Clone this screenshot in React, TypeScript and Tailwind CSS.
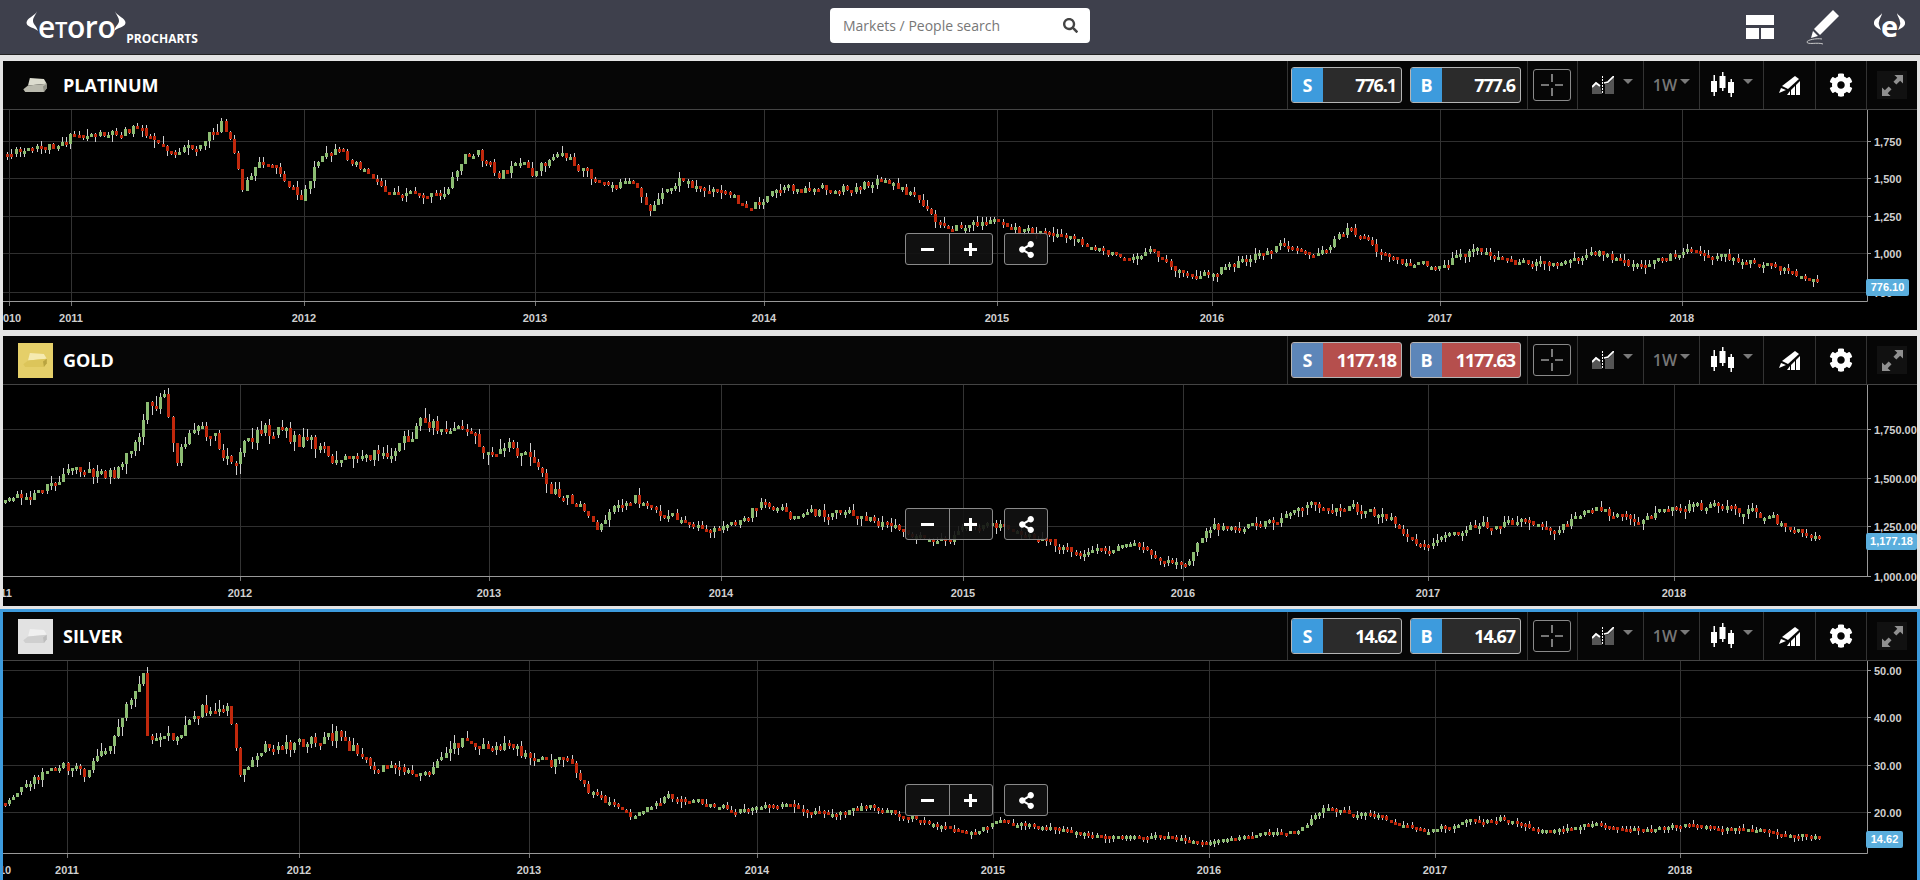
import { FaCog, FaSearch, FaShareAlt } from 'react-icons/fa';

// traced off the shot at 1568px wide, so everything gets scaled by this
const SCALE = 1920 / 1568;

type Pt = [number, number];

type Market = {
  name: string;
  sell: string;
  buy: string;
  digits: string;
  top: number;
  bottom: number;
  height: string;
  panel: string;
  valueBg: string;
  sideBg: string;
  tagClass: string;
  icon: 'plain' | 'gold' | 'silver';
  seed: number;
  volMin: number;
  volMax: number;
  years: [string, number][];
  levels: [string, number][];
  yearY: number;
  path: Pt[];
};

const markets: Market[] = [
  {
    name: 'PLATINUM',
    sell: '776.1',
    buy: '777.6',
    digits: '776.10',
    top: 109,
    bottom: 300,
    height: 'h-[269px]',
    panel: '',
    valueBg: 'bg-[#2b2b2b]',
    sideBg: 'bg-[#3d9bdd]',
    tagClass: 'top-[169px] w-[43px]',
    icon: 'plain',
    seed: 11,
    volMin: 3.2,
    volMax: 6,
    yearY: 321,
    years: [['2010', 9], ['2011', 71], ['2012', 304], ['2013', 535], ['2014', 764], ['2015', 997], ['2016', 1212], ['2017', 1440], ['2018', 1682]],
    levels: [['1,750', 140], ['1,500', 177], ['1,250', 215], ['1,000', 252], ['750', 291]],
    path: [[5,125],[30,122],[60,110],[85,108],[115,103],[125,112],[145,125],[165,115],[180,100],[190,125],[197,152],[210,135],[220,130],[235,150],[245,163],[255,135],[272,124],[290,130],[315,155],[335,155],[360,160],[380,125],[390,125],[405,142],[425,135],[435,142],[455,122],[475,138],[490,150],[515,150],[530,170],[555,145],[575,155],[590,157],[612,168],[635,155],[655,153],[680,155],[720,148],[745,158],[765,183],[785,185],[815,178],[835,188],[860,190],[880,195],[905,208],[940,205],[965,224],[990,222],[1020,210],[1050,198],[1075,208],[1100,185],[1125,205],[1150,215],[1175,216],[1205,203],[1235,213],[1270,216],[1305,205],[1325,215],[1350,213],[1375,205],[1410,210],[1450,218],[1480,227],[1487,234]],
  },
  {
    name: 'GOLD',
    sell: '1177.18',
    buy: '1177.63',
    digits: '1,177.18',
    top: 384,
    bottom: 575,
    height: 'h-[270px]',
    panel: '',
    valueBg: 'bg-[#b54f4d]',
    sideBg: 'bg-[#5d86b9]',
    tagClass: 'top-[148px] w-[51px]',
    icon: 'gold',
    seed: 29,
    volMin: 2.6,
    volMax: 11,
    yearY: 596,
    years: [['2011', 0], ['2012', 240], ['2013', 489], ['2014', 721], ['2015', 963], ['2016', 1183], ['2017', 1428], ['2018', 1674]],
    levels: [['1,750.00', 428], ['1,500.00', 477], ['1,250.00', 525], ['1,000.00', 575]],
    path: [[3,410],[30,402],[60,385],[95,385],[110,360],[120,330],[133,325],[143,375],[165,345],[180,365],[190,375],[210,350],[225,348],[245,360],[265,365],[275,378],[300,372],[320,370],[340,345],[355,350],[375,355],[395,362],[415,362],[440,378],[450,400],[470,410],[488,432],[500,415],[517,405],[540,418],[580,435],[600,425],[625,410],[645,420],[690,418],[730,430],[755,440],[775,440],[790,428],[815,428],[850,440],[880,452],[905,448],[925,442],[945,458],[970,458],[985,430],[1025,430],[1065,412],[1110,415],[1130,420],[1160,445],[1200,430],[1240,425],[1265,432],[1300,415],[1340,425],[1370,412],[1420,415],[1450,425],[1480,436],[1487,441]],
  },
  {
    name: 'SILVER',
    sell: '14.62',
    buy: '14.67',
    digits: '14.62',
    top: 660,
    bottom: 852,
    height: 'h-[271px]',
    panel: '-mx-[3px] -mt-[3px] border-x-[3px] border-t-[3px] border-[#3d9bdd]',
    valueBg: 'bg-[#2b2b2b]',
    sideBg: 'bg-[#3d9bdd]',
    tagClass: 'top-[170px] w-[37px]',
    icon: 'silver',
    seed: 47,
    volMin: 1.1,
    volMax: 11,
    yearY: 873,
    years: [['2010', -1], ['2011', 67], ['2012', 299], ['2013', 529], ['2014', 757], ['2015', 993], ['2016', 1209], ['2017', 1435], ['2018', 1680]],
    levels: [['50.00', 669], ['40.00', 716], ['30.00', 764], ['20.00', 811]],
    path: [[3,655],[20,640],[50,625],[70,632],[90,605],[100,590],[110,555],[116,550],[120,610],[140,600],[165,575],[185,578],[195,630],[215,605],[235,610],[255,605],[275,600],[305,625],[350,632],[375,605],[400,610],[420,610],[435,622],[465,622],[480,645],[515,665],[545,650],[575,655],[600,662],[640,657],[680,665],[710,657],[760,672],[790,680],[815,670],[860,676],[900,683],[950,682],[985,687],[1030,680],[1060,678],[1080,660],[1120,665],[1160,678],[1200,670],[1225,668],[1260,678],[1300,672],[1340,677],[1375,673],[1430,677],[1487,683]],
  },
];

const rng = (seed: number) => () => {
  seed = (seed + 0x6d2b79f5) | 0;
  let t = Math.imul(seed ^ (seed >>> 15), 1 | seed);
  t = (t + Math.imul(t ^ (t >>> 7), 61 | t)) ^ t;
  return ((t ^ (t >>> 14)) >>> 0) / 4294967296;
};

const priceAt = (path: Pt[], x: number) => {
  for (let i = 1; i < path.length; i++) {
    if (x <= path[i][0] * SCALE) {
      const x0 = path[i - 1][0] * SCALE;
      const x1 = path[i][0] * SCALE;
      const t = Math.max(0, (x - x0) / (x1 - x0));
      return (path[i - 1][1] + (path[i][1] - path[i - 1][1]) * t) * SCALE;
    }
  }
  return path[path.length - 1][1] * SCALE;
};

const buildCandles = (m: Market) => {
  const rand = rng(m.seed);
  const ys = m.path.map((p) => p[1] * SCALE);
  const high = Math.min(...ys);
  const low = Math.max(...ys);
  const out: { x: number; y: number; h: number; wt: number; wb: number; up: boolean }[] = [];
  const lastX = 1819;
  const firstX = m.path[0][0] * SCALE;
  const step = 4.2;
  let prev = priceAt(m.path, firstX);
  let drift = 0;
  for (let x = firstX; x <= lastX; x += step) {
    const base = priceAt(m.path, x);
    const vol = m.volMin + (m.volMax - m.volMin) * ((low - base) / (low - high));
    drift = drift * 0.25 + (rand() - 0.5) * vol * 1.8;
    const close = base + drift;
    const topY = Math.min(prev, close);
    const h = Math.max(3, Math.abs(close - prev));
    const a = rand();
    const b = rand();
    out.push({
      x: Math.round(x),
      y: Math.round(topY),
      h: Math.round(h),
      wt: Math.round(topY - a * a * (vol * 0.9 + 2.5)),
      wb: Math.round(topY + h + b * b * (vol * 0.9 + 2.5)),
      up: close < prev,
    });
    prev = close;
  }
  return out;
};

const Caret = () => <span className="ml-[9px] mb-[7px] h-0 w-0 border-x-[5px] border-t-[5px] border-x-transparent border-t-[#7a7a7a]" />;

const Ingot = ({ kind }: { kind: Market['icon'] }) => {
  const c =
    kind === 'gold'
      ? ['#f5eab0', '#dcc55a', '#b9a440']
      : kind === 'silver'
        ? ['#f0f0f0', '#cfcfcf', '#bcbcbc']
        : ['#dcdccf', '#b9b9ad', '#8f8f85'];
  return (
    <svg viewBox="0 0 26 16" className="h-[15px] w-[25px]">
      <polygon points="7,0 22,1 25,6 5,8" fill={c[0]} />
      <polygon points="0,12 5,8 25,6 25,11 22,15 2,15" fill={c[1]} />
      <polygon points="21,9 25,6 25,11 22,15" fill={c[2]} />
    </svg>
  );
};

const MarketIcon = ({ kind }: { kind: Market['icon'] }) => {
  if (kind === 'plain') {
    return (
      <div className="flex h-[35px] w-[35px] items-center justify-center">
        <Ingot kind={kind} />
      </div>
    );
  }
  return (
    <div className={`flex h-[35px] w-[35px] items-center justify-center ${kind === 'gold' ? 'bg-[#e5cf69]' : 'bg-[#e2e2e2]'}`}>
      <Ingot kind={kind} />
    </div>
  );
};

const Quote = ({ side, value, m }: { side: string; value: string; m: Market }) => (
  <div className={`flex h-[36px] w-[111px] overflow-hidden rounded-[3px] border border-[#b5b5b5] ${m.valueBg}`}>
    <div className={`flex w-[31px] items-center justify-center text-[18px] font-bold text-white ${m.sideBg}`}>{side}</div>
    <div className="flex flex-1 items-center justify-end pr-[5px] text-[18px] font-bold tracking-[-1.1px] text-white">{value}</div>
  </div>
);

const Cell = ({ w, children }: { w: string; children: React.ReactNode }) => (
  <div className={`flex h-full items-center justify-center border-l border-[#333] ${w}`}>{children}</div>
);

const Toolbar = ({ m }: { m: Market }) => (
  <div className="flex h-[48px] items-center bg-[#060606] pl-[15px]">
    <MarketIcon kind={m.icon} />
    <div className="ml-[10px] text-[18px] font-bold text-white">{m.name}</div>
    <div className="ml-auto flex h-full items-center">
      <div className="flex h-full items-center gap-[8px] border-l border-[#333] pl-[3px] pr-[6px]">
        <Quote side="S" value={m.sell} m={m} />
        <Quote side="B" value={m.buy} m={m} />
      </div>
      <Cell w="w-[50px]">
        <div className="-ml-[1px] flex h-[32px] w-[38px] items-center justify-center rounded-[3px] border border-[#8a8a8a]">
          <svg viewBox="0 0 24 24" className="h-[24px] w-[24px]" stroke="#9a9a9a" strokeWidth="1.6">
            <path d="M12 1v8M12 15v8M1 12h8M15 12h8" />
          </svg>
        </div>
      </Cell>
      <Cell w="w-[66px]">
        <svg viewBox="0 0 22 18" className="ml-[4px] h-[18px] w-[22px]">
          <path d="M0 18V10L4 6L8 9L10 18Z" fill="#555" />
          <path d="M13 18V8L17 7L22 1V18Z" fill="#555" />
          <path d="M0 11L4 7L8 10M12 7L16 6L22 0" fill="none" stroke="#fff" strokeWidth="1.8" />
          <path d="M10.5 0V18" stroke="#fff" strokeWidth="1" strokeDasharray="2 1" />
        </svg>
        <Caret />
      </Cell>
      <Cell w="w-[56px]">
        <span className="text-[16px] font-semibold text-[#777]">1W</span>
        <span className="mb-[7px] ml-[3px] h-0 w-0 border-x-[5px] border-t-[5px] border-x-transparent border-t-[#7a7a7a]" />
      </Cell>
      <Cell w="w-[64px]">
        <svg viewBox="0 0 23 26" className="h-[26px] w-[23px]" fill="#fff">
          <rect x="0" y="9" width="6" height="11" />
          <rect x="2.5" y="3" width="1.5" height="21" />
          <rect x="8.5" y="4" width="6" height="12" />
          <rect x="11" y="0" width="1.5" height="19" />
          <rect x="17" y="10" width="6" height="11" />
          <rect x="19.5" y="7" width="1.5" height="18" />
        </svg>
        <Caret />
      </Cell>
      <Cell w="w-[52px]">
        <svg viewBox="0 0 22 19" className="h-[19px] w-[22px]" fill="#fff">
          <polygon points="16,0 20,3 9,13 3,10" />
          <polygon points="2,12 7,14 0,17" />
          <polygon points="8,19 11,15 11,19" />
          <polygon points="12,14 16,10 16,19 12,19" />
          <polygon points="17,9 21,5 21,19 17,19" />
        </svg>
      </Cell>
      <Cell w="w-[51px]">
        <FaCog className="text-[24px] text-white" />
      </Cell>
      <Cell w="w-[51px]">
        <div className="flex h-[28px] w-[30px] items-center justify-center bg-[#111]">
          <svg viewBox="0 0 22 22" className="h-[21px] w-[21px]" fill="#8f8f8f">
            <polygon points="13,0 22,0 22,9 19,6 15,10 12,7 16,3" />
            <polygon points="0,22 0,13 3,16 7,12 10,15 6,19 9,22" />
          </svg>
        </div>
      </Cell>
    </div>
  </div>
);

const Chart = ({ m }: { m: Market }) => {
  const candles = buildCandles(m);
  const h = m.bottom - m.top + (m.name === 'SILVER' ? 28 : m.name === 'GOLD' ? 31 : 30);
  return (
    <div className="relative flex-1 overflow-hidden bg-black">
      <svg viewBox={`3 ${m.top} 1914 ${h}`} width={1914} height={h} className="block" style={{ fontFamily: '"Liberation Sans", Arial, sans-serif' }}>
        {m.levels.map(([label, y]) => (
          <g key={label}>
            <line x1="3" x2="1867" y1={y + 0.5} y2={y + 0.5} stroke="#2f2f2f" />
            <line x1="1867" x2="1871" y1={y + 0.5} y2={y + 0.5} stroke="#999" />
            <text x="1874" y={y + 4.5} fontSize="11" fontWeight="700" fill="#cfcfcf">{label}</text>
          </g>
        ))}
        {m.years.map(([label, x]) => (
          <g key={label}>
            <line x1={x + 0.5} x2={x + 0.5} y1={m.top} y2={m.bottom} stroke="#333" />
            <line x1={x + 0.5} x2={x + 0.5} y1={m.bottom} y2={m.bottom + 5} stroke="#777" />
            <text x={x} y={m.yearY} fontSize="11" fontWeight="700" fill="#cfcfcf" textAnchor="middle">{label}</text>
          </g>
        ))}
        <path d={`M3 ${m.bottom + 0.5}H1867.5V${m.top}`} fill="none" stroke="#999" />
        <g shapeRendering="crispEdges">
          {candles.map((c, i) => (
            <g key={i}>
              <line x1={c.x + 1.5} x2={c.x + 1.5} y1={c.wt} y2={c.wb} stroke="#cfcfcf" />
              <rect x={c.x} y={c.y} width="3" height={c.h} fill={c.up ? '#8cbc72' : '#c0280c'} />
            </g>
          ))}
        </g>
      </svg>
      <div className={`absolute left-[1863px] flex h-[17px] items-center justify-center rounded-[2px] bg-[#5aaedd] text-[11px] font-bold text-white font-['Liberation_Sans'] ${m.tagClass}`}>
        {m.digits}
      </div>
      <div className="absolute left-[902px] top-[123px] flex gap-[11px] text-white">
        <div className="flex h-[32px] w-[88px] rounded-[3px] border border-[#8a8a8a] bg-[#121212]/90">
          <div className="flex flex-1 items-center justify-center border-r border-[#8a8a8a]">
            <span className="h-[3px] w-[13px] bg-white" />
          </div>
          <div className="relative flex flex-1 items-center justify-center">
            <span className="h-[3px] w-[13px] bg-white" />
            <span className="absolute h-[13px] w-[3px] bg-white" />
          </div>
        </div>
        <div className="flex h-[32px] w-[44px] items-center justify-center rounded-[3px] border border-[#8a8a8a] bg-[#121212]/90">
          <FaShareAlt className="text-[17px]" />
        </div>
      </div>
    </div>
  );
};

const Panel = ({ m }: { m: Market }) => (
  <section className={`flex flex-col overflow-hidden bg-black ${m.height} ${m.panel}`}>
    <div className="border-b border-[#444]">
      <Toolbar m={m} />
    </div>
    <Chart m={m} />
  </section>
);

const Horn = ({ flip }: { flip?: boolean }) => (
  <svg viewBox="0 0 12 20" className={`h-[20px] w-[12px] ${flip ? '-scale-x-100' : ''}`} fill="#fff">
    <path d="M11 0C10 4 3 6 1 10C-1 14 4 16 7 17C9 18 11 19 12 20C10 14 7 13 7 10C7 6 10 4 11 0Z" />
  </svg>
);

const Header = () => (
  <header className="relative flex h-[55px] items-center border-b border-[#222] bg-[#3e404c] font-['Open_Sans']">
    <div className="flex items-start pl-[26px] pt-[4px] text-white">
      <Horn />
      <div className="-mt-[3px] -mr-[1px] flex h-[38px] items-baseline text-[30px] font-semibold leading-[38px] tracking-[-0.4px]">
        <span>e</span>
        <span className="text-[22px]">T</span>
        <span>oro</span>
      </div>
      <Horn flip />
      <span className="mt-[20px] text-[12px] font-bold leading-[16px]">PROCHARTS</span>
    </div>
    <div className="absolute left-[830px] top-[8px] flex h-[35px] w-[260px] items-center justify-between rounded-[4px] bg-white pl-[13px] pr-[12px] text-[14px] text-[#777]">
      <span>Markets / People search</span>
      <FaSearch className="text-[15px] text-[#444]" />
    </div>
    <div className="ml-auto flex items-center gap-[34px] pr-[15px]">
      <div className="-mr-[2px] flex w-[28px] flex-col gap-[3px]">
        <div className="h-[10px] bg-white" />
        <div className="flex gap-[2px]">
          <div className="h-[11px] flex-1 bg-white" />
          <div className="h-[11px] flex-1 bg-white" />
        </div>
      </div>
      <svg viewBox="0 0 34 37" className="h-[37px] w-[34px]">
        <polygon points="27,1 33,7 14,26 8,20" fill="#fff" />
        <polygon points="7,22 12,27 5,29" fill="#fff" />
        <path d="M16 30C10 29 1 31 1 33C1 36 12 33 17 35" fill="none" stroke="#c9c9c9" strokeWidth="1" />
      </svg>
      <div className="flex w-[31px] items-center justify-center text-white">
        <svg viewBox="0 0 31 28" className="h-[28px] w-[31px]" fill="#fff">
          <path d="M8 0C7 3 1 5 0 9C-1 13 3 15 7 17C6 14 4 12 5 9C5 6 8 3 8 0Z" />
          <path d="M23 0C24 3 30 5 31 9C32 13 28 15 24 17C25 14 27 12 26 9C26 6 23 3 23 0Z" />
          <text x="15.5" y="24" fontSize="29" fontWeight="700" textAnchor="middle" fontFamily="Open Sans, sans-serif">e</text>
        </svg>
      </div>
    </div>
  </header>
);

export default function App() {
  return (
    <div className="h-[880px] w-[1920px] overflow-hidden bg-[#e3e3e3] font-['Open_Sans']">
      <Header />
      <main className="flex flex-col gap-[6px] px-[3px] pt-[6px]">
        {markets.map((m) => (
          <Panel key={m.name} m={m} />
        ))}
      </main>
    </div>
  );
}
